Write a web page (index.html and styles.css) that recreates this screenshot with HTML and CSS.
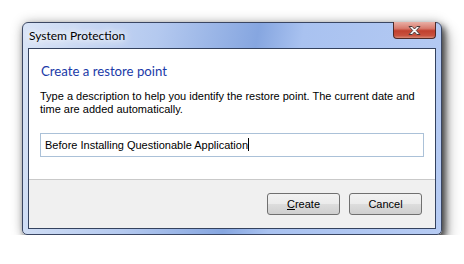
FILE: index.html
```html
<!DOCTYPE html>
<html lang="en">
<head>
    <meta charset="UTF-8">
    <title>System Protection</title>
    <link rel="stylesheet" href="styles.css">
</head>
<body>
    <div class="window">
        <div class="title-bar">
            <span class="title">System Protection</span>
            <button class="close-btn" aria-label="Close">
                <svg width="15" height="11" viewBox="0 0 15 11">
                    <path d="M2 1.5h3.2l2.3 2.5 2.3-2.5H13L9.3 5.5 13 9.5H9.8L7.5 7 5.2 9.5H2l3.7-4z" fill="#fff" stroke="#4a3a3a" stroke-width="1" stroke-linejoin="round"/>
                </svg>
            </button>
        </div>

        <div class="client">
            <div class="content">
                <h1 class="instruction">Create a restore point</h1>
                <p class="description">Type a description to help you identify the restore point. The current date and time are added automatically.</p>
                <div class="text-field">Before Installing Questionable Application<span class="caret"></span></div>
            </div>

            <div class="footer">
                <button class="btn"><u>C</u>reate</button>
                <button class="btn">Cancel</button>
            </div>
        </div>
    </div>
</body>
</html>
```

FILE: styles.css
```css
body {
    margin: 0;
    padding: 22px 0 0 22px;
    background: #ffffff;
    font-family: "Liberation Sans", Arial, sans-serif;
}

.window {
    width: 408px;
    height: 206px;
    padding: 0 5px 5px 5px;
    border: 1px solid #3a4662;
    border-radius: 6px 6px 5px 5px;
    background: linear-gradient(100deg, #d9e4f6 0%, #b4c9ef 30%, #86a6e0 52%, #a9c2f0 62%, #b6cbf3 100%);
    box-shadow: 0 0 12px rgba(0, 0, 0, 0.25), 3px 4px 6px rgba(0, 0, 0, 0.6), 6px 8px 14px rgba(0, 0, 0, 0.3);
    display: flex;
    flex-direction: column;
}

.title-bar {
    height: 25px;
    display: flex;
    justify-content: space-between;
    align-items: flex-start;
}

.title {
    font-family: "Lato", sans-serif;
    font-size: 12px;
    color: #000;
    margin: 5px 0 0 1px;
    text-shadow: 0 0 6px #fff, 0 0 10px #fff, 0 0 14px #fff;
}

.close-btn {
    width: 43px;
    height: 17px;
    margin-top: -1px;
    padding: 0;
    border: 1px solid #4e2a28;
    border-top: none;
    border-radius: 0 0 4px 4px;
    background: linear-gradient(#e9b0a6 0%, #d77a6d 40%, #c1402f 55%, #c8523f 85%, #d88a78 100%);
    display: flex;
    align-items: center;
    justify-content: center;
}

.client {
    flex: 1;
    border: 1px solid #34425e;
    background: #fff;
    display: flex;
    flex-direction: column;
}

.content {
    flex: 1;
    padding: 12px 11px 0 11px;
}

.instruction {
    font-family: "Lato", sans-serif;
    font-size: 13.2px;
    font-weight: normal;
    color: #1a3aa8;
    margin: 0 0 9px 1px;
    line-height: 20px;
}

.description {
    font-size: 11px;
    line-height: 13px;
    margin: 0 0 17px 0;
    color: #000;
}

.text-field {
    height: 22px;
    border: 1px solid #abc1d8;
    padding: 0 0 0 4px;
    font-size: 11px;
    line-height: 22px;
    color: #000;
}

.caret {
    display: inline-block;
    width: 1px;
    height: 13px;
    background: #000;
    vertical-align: -2px;
}

.footer {
    height: 35px;
    padding: 13px 13px 0 0;
    border-top: 1px solid #c9c9c9;
    background: #f0f0f0;
    display: flex;
    justify-content: flex-end;
    align-items: flex-start;
    gap: 9px;
}

.btn {
    width: 73px;
    height: 22px;
    padding: 0;
    border: 1px solid #707070;
    border-radius: 3px;
    background: linear-gradient(#f2f2f2 0%, #ebebeb 50%, #dddddd 51%, #cfcfcf 100%);
    font-family: "Liberation Sans", Arial, sans-serif;
    font-size: 11px;
    color: #000;
}
```
